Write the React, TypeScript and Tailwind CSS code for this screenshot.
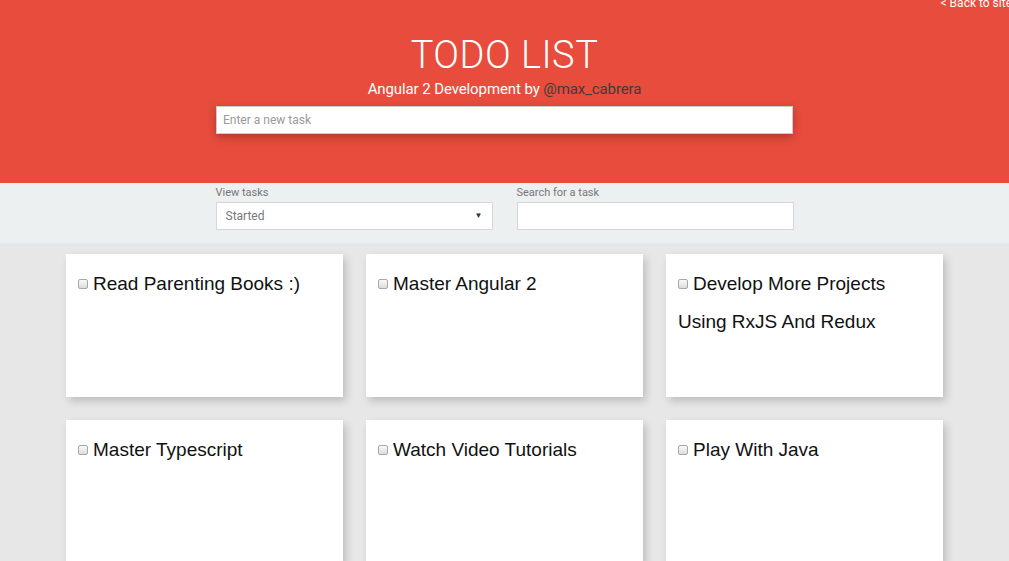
const tasks = [
  'Read Parenting Books :)',
  'Master Angular 2',
  'Develop More Projects Using RxJS And Redux',
  'Master Typescript',
  'Watch Video Tutorials',
  'Play With Java',
];

export default function App() {
  return (
    <div className="min-h-[561px] bg-[#e7e7e7] overflow-hidden" style={{ fontFamily: 'Roboto, "Liberation Sans", sans-serif' }}>
      <header className="relative h-[183px] bg-[#e74c3c] text-white flex flex-col items-center">
        <a href="#" className="absolute right-[-3px] top-[-6px] text-[12px] text-white">&lt; Back to site</a>
        <h1 className="mt-[33px] text-[38px] leading-[45px] font-light tracking-[0.5px]">TODO LIST</h1>
        <p className="mt-[1px] text-[15px] leading-[20px] tracking-[-0.1px]">
          Angular 2 Development by <a href="#" className="text-[#3d3d3d]">@max_cabrera</a>
        </p>
        <input
          type="text"
          placeholder="Enter a new task"
          className="mt-[7px] w-[577px] h-[28px] bg-white border border-[#ccc] px-[6px] text-[12px] text-[#555] placeholder:text-[#9a9a9a] shadow-[0_3px_8px_rgba(0,0,0,0.25)] outline-none"
        />
      </header>

      <section className="h-[60px] bg-[#ecf0f1] flex justify-center gap-[24px] pt-[3px]">
        <label className="w-[277px] flex flex-col">
          <span className="text-[11px] leading-[14px] text-[#777]">View tasks</span>
          <div className="mt-[2px] h-[28px] bg-white border border-[#d6d6d6] flex items-center justify-between px-[9px]">
            <span className="text-[12px] text-[#777]">Started</span>
            <span className="text-[8px] text-[#333]">▼</span>
          </div>
        </label>
        <label className="w-[277px] flex flex-col">
          <span className="text-[11px] leading-[14px] text-[#777]">Search for a task</span>
          <input type="text" className="mt-[2px] h-[28px] bg-white border border-[#d6d6d6] px-[8px] text-[12px] outline-none" />
        </label>
      </section>

      <main className="w-[877px] mx-auto mt-[11px] grid grid-cols-3 gap-[23px]">
        {tasks.map((t) => (
          <div
            key={t}
            className="h-[143px] bg-white shadow-[3px_4px_8px_rgba(0,0,0,0.18)] pt-[11px] px-[12px] text-[19px] leading-[38px] text-[#111]"
            style={{ fontFamily: '"Liberation Sans", Arial, sans-serif' }}
          >
            <input
              type="checkbox"
              className="appearance-none inline-block w-[10px] h-[10px] mr-[5px] align-[1px] rounded-[2px] border border-[#a8a8a8] bg-gradient-to-b from-[#fafafa] to-[#dcdcdc]"
            />
            {t}
          </div>
        ))}
      </main>
    </div>
  );
}
